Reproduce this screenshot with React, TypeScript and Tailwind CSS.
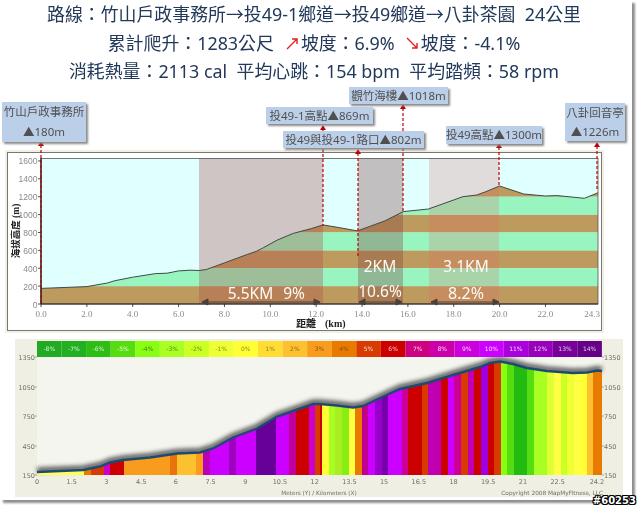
import React from "react";

const CJK = "font-['Noto_Sans','Noto_Sans_CJK_TC',sans-serif]";
const RED = "#c00000";

// elevation profile in km / metres, read off the upper chart
const profile: [number, number][] = [
  [0, 175], [2, 195], [2.9, 235], [3.2, 260], [4, 300], [5, 340], [5.5, 345], [6, 370], [6.5, 378], [6.9, 375],
  [7.2, 385], [8, 460], [9, 555], [9.4, 590], [9.7, 630], [10.3, 715], [11, 790], [11.8, 845], [12.3, 885], [13, 855],
  [13.8, 818], [15, 930], [15.8, 1033], [16.9, 1063], [18.4, 1200], [19, 1219], [19.4, 1256], [20, 1320],
  [21.05, 1230], [22, 1208], [22.5, 1212], [23.7, 1182], [24.3, 1245],
];

const kmX = (km: number) => 41 + km * 22.93;
const mY = (m: number) => 304 - m * 0.0894;
const profileLine = profile.map(([k, m]) => `${kmX(k).toFixed(1)},${mY(m).toFixed(1)}`).join(" ");

const legend: [string, string, string][] = [
  ["-8%", "#22aa22", "#d8f0d0"], ["-7%", "#22b022", "#d8f0d0"], ["-6%", "#2ebd14", "#d8f0d0"], ["-5%", "#55dd11", "#e8f8d8"],
  ["-4%", "#88ff11", "#4d7a20"], ["-3%", "#aaff22", "#5c8a20"], ["-2%", "#ccff22", "#6f8f20"], ["-1%", "#eeff33", "#85902a"],
  ["0%", "#ffff33", "#8f8f2a"], ["1%", "#ffdd33", "#8f7a2a"], ["2%", "#fdc02f", "#8f6a20"], ["3%", "#f99b1c", "#8a5a10"],
  ["4%", "#e87a00", "#8a4a00"], ["5%", "#d93a00", "#f8d8c8"], ["6%", "#cc0000", "#f8c8c8"], ["7%", "#cc0080", "#f8d0e8"],
  ["8%", "#cc00aa", "#f8d0f0"], ["9%", "#cc00dd", "#f8d0f8"], ["10%", "#cc00ff", "#f8d8ff"], ["11%", "#aa00dd", "#f0d0f8"],
  ["12%", "#9900bb", "#e8d0f0"], ["13%", "#770099", "#e0c8e8"], ["14%", "#660088", "#e0c8e8"],
];

// coloured columns under the lower profile, [right edge px, colour]
const columns: [number, string][] = [
  [84, "#ffff55"], [91, "#e87a00"], [104, "#d93a00"], [110, "#cc00cc"], [124, "#cc0000"], [170, "#f99b1c"], [177, "#e8720c"], [196, "#fdc02f"],
  [203, "#f99b1c"], [210, "#b900b9"], [229, "#cc00ff"], [236, "#a000c0"], [256, "#cc00ff"], [276, "#660099"], [289, "#cc00ff"], [296, "#c00099"],
  [309, "#cc0000"], [315, "#cc00cc"], [320, "#d93a00"], [322, "#cc0000"], [329, "#ffff33"], [335, "#aaff22"], [342, "#aaee22"], [349, "#88ee11"],
  [355, "#ffff44"], [362, "#e87a00"], [368, "#c0008f"], [375, "#cc00ff"], [382, "#9900cc"], [388, "#7700aa"], [402, "#cc00ff"], [408, "#cc0099"],
  [422, "#cc0000"], [428, "#d93a00"], [441, "#c000b0"], [448, "#cc0000"], [454, "#cc00ff"], [461, "#cc0099"], [468, "#d93a00"], [474, "#c000b0"],
  [481, "#cc0000"], [488, "#a000e0"], [494, "#cc0000"], [501, "#d93a00"], [507, "#88ff11"], [514, "#55dd11"], [527, "#22bb11"], [534, "#55dd11"],
  [547, "#aaff22"], [554, "#ddff33"], [561, "#ffff44"], [567, "#ccff22"], [574, "#eeff33"], [581, "#ffff44"], [587, "#ffff33"], [593, "#fdc02f"],
  [602, "#e87a00"],
];

const lowerProfile = "37,472 83,470 100,466.5 110,462.5 123,460 150,457.5 177,453.5 200,452.5 213,448.5 233,437.5 257,428.5 277,416.5 293,411 313,404 320,404 337,405.5 353,407.5 363,406 380,398 400,389 427,383 453,375 480,367 490,363 500,361.5 513,364 527,368 547,371 560,372 573,373 587,372.5 597,370.5 602,371";

const callouts = [
  { lines: ["竹山戶政事務所", "▲180m"], cls: "left-[2px] top-[17px] w-[84px] h-[40px]" },
  { lines: ["觀竹海樓▲1018m"], cls: "left-[349px] top-[2px] w-[99px] h-[17px]" },
  { lines: ["投49-1高點▲869m"], cls: "left-[266px] top-[22px] w-[107px] h-[17px]" },
  { lines: ["投49與投49-1路口▲802m"], cls: "left-[283px] top-[46px] w-[141px] h-[17px]" },
  { lines: ["投49高點▲1300m"], cls: "left-[446px] top-[41px] w-[96px] h-[18px]" },
  { lines: ["八卦回音亭", "▲1226m"], cls: "left-[565px] top-[18px] w-[60px] h-[38px]" },
];

const Leader = ({ x, top, bottom }: { x: number; top: number; bottom: number }) => (
  <g>
    <line x1={x} y1={top + 4} x2={x} y2={bottom} stroke={RED} strokeWidth={1.2} strokeDasharray="3 2" />
    <polygon points={`${x},${top} ${x - 3},${top + 5} ${x + 3},${top + 5}`} fill={RED} />
  </g>
);

const Span = ({ a, b }: { a: number; b: number }) => (
  <g stroke="#4a4038" fill="#4a4038">
    <line x1={a} y1={302} x2={b} y2={302} strokeWidth={1.2} />
    <polygon points={`${a},302 ${a + 6},299 ${a + 6},305`} />
    <polygon points={`${b},302 ${b - 6},299 ${b - 6},305`} />
  </g>
);

const UpperChart = () => (
  <svg viewBox="8 153 593 177" width={593} height={177} className="block">
    <defs>
      <clipPath id="under">
        <polygon points={`41,304 ${profileLine} 598,304`} />
      </clipPath>
    </defs>
    <rect x={41} y={158} width={557} height={146} fill="#e0ffff" />
    {[0, 400, 800, 1200].map((m) => (
      <rect key={m} x={41} y={mY(m + 200)} width={557} height={17.9} fill="#bd9a5d" clipPath="url(#under)" />
    ))}
    {[200, 600, 1000, 1400].map((m) => (
      <rect key={m} x={41} y={mY(m + 200)} width={557} height={17.9} fill="#98f5bf" clipPath="url(#under)" />
    ))}
    <rect x={199} y={158} width={124} height={146} fill="#ac4b4b" opacity={0.32} />
    <rect x={358} y={158} width={45} height={146} fill="#823c3c" opacity={0.33} />
    <rect x={429} y={158} width={70} height={146} fill="#e66868" opacity={0.23} />
    <polyline points={profileLine} fill="none" stroke="#3f4a44" strokeWidth={1} />
    <rect x={41} y={158.5} width={557} height={145.5} fill="none" stroke="#555" strokeWidth={0.8} />
    <line x1={41} y1={158} x2={41} y2={304} stroke="#111" strokeWidth={1.2} />
    <line x1={41} y1={304} x2={598} y2={304} stroke="#222" strokeWidth={1.2} />
    {[0, 200, 400, 600, 800, 1000, 1200, 1400, 1600].map((m) => (
      <g key={m}>
        <line x1={38} y1={mY(m)} x2={41} y2={mY(m)} stroke="#222" strokeWidth={0.8} />
        <text x={37.5} y={mY(m) + 3.5} textAnchor="end" fontSize={8.5} fill="#8a8a8a" fontFamily="'Liberation Sans', sans-serif">{m}</text>
      </g>
    ))}
    {[0, 2, 4, 6, 8, 10, 12, 14, 16, 18, 20, 22].map((k) => (
      <g key={k}>
        <line x1={kmX(k)} y1={304} x2={kmX(k)} y2={307} stroke="#222" strokeWidth={0.8} />
        <text x={kmX(k)} y={317} textAnchor="middle" fontSize={9} fill="#8a8a8a" fontFamily="'Liberation Serif', serif">{k.toFixed(1)}</text>
      </g>
    ))}
    <text x={600} y={317} textAnchor="end" fontSize={9} fill="#8a8a8a" fontFamily="'Liberation Serif', serif">24.3</text>
    <text x={0} y={0} transform="translate(19 231) rotate(-90)" textAnchor="middle" fontSize={9.5} fontWeight={700} fill="#222" fontFamily="'Liberation Serif', 'Noto Sans CJK TC', serif">海拔高度 (m)</text>
    <text x={296} y={327} fontSize={10} fontWeight={700} fill="#222" fontFamily="'Liberation Serif', 'Noto Sans CJK TC', serif">距離</text>
    <text x={325} y={327} fontSize={10} fontWeight={700} fill="#222" fontFamily="'Liberation Serif', serif">(km)</text>
    <Span a={202} b={320} />
    <Span a={359} b={402} />
    <Span a={431} b={499} />
    <g fill="#fbfbf6" fontFamily="'Noto Sans', sans-serif" textAnchor="middle">
      <text x={250.5} y={299} fontSize={15.5}>5.5KM</text>
      <text x={294} y={299} fontSize={15.5}>9%</text>
      <text x={380} y={272} fontSize={15.5}>2KM</text>
      <text x={380} y={297} fontSize={15.5}>10.6%</text>
      <text x={466} y={272} fontSize={15.5}>3.1KM</text>
      <text x={466} y={299} fontSize={16}>8.2%</text>
    </g>
  </svg>
);

const LowerChart = () => (
  <svg viewBox="15 339 608 158" width={608} height={158} className="block">
    <defs>
      <clipPath id="lower">
        <polygon points={`37,475 ${lowerProfile} 602,475`} />
      </clipPath>
    </defs>
    <rect x={37} y={357} width={565} height={118} fill="#f5f5ef" />
    <polyline points={lowerProfile} fill="none" stroke="#555" strokeWidth={5} className="blur-[2px]" transform="translate(0 -2)" />
    <g clipPath="url(#lower)">
      {columns.map(([right, color], i) => {
        const left = i === 0 ? 37 : columns[i - 1][0];
        return <rect key={right} x={left} y={355} width={right - left + 0.5} height={121} fill={color} />;
      })}
    </g>
    <polyline points={lowerProfile} fill="none" stroke="#1c4a72" strokeWidth={2.4} />
    {legend.map(([label, bg, fg], i) => (
      <g key={label}>
        <rect x={37 + i * 24.56} y={341} width={24.56} height={16} fill={bg} />
        <text x={37 + (i + 0.5) * 24.56} y={351} textAnchor="middle" fontSize={6} fill={fg} fontFamily="'DejaVu Sans', sans-serif">{label}</text>
      </g>
    ))}
    {([["1350", 357], ["1050", 387], ["750", 416], ["450", 446], ["150", 475]] as [string, number][]).map(([t, y]) => (
      <g key={t} fontSize={6.5} fill="#6f6f68" fontFamily="'DejaVu Sans', sans-serif">
        <text x={35} y={y + 2.5} textAnchor="end">{t}</text>
        <text x={604} y={y + 2.5}>{t}</text>
        <line x1={35} x2={37} y1={y} y2={y} stroke="#777" strokeWidth={0.6} />
        <line x1={602} x2={604} y1={y} y2={y} stroke="#777" strokeWidth={0.6} />
      </g>
    ))}
    {["0", "1.5", "3", "4.5", "6", "7.5", "9", "10.5", "12", "13.5", "15", "16.5", "18", "19.5", "21", "22.5", "24.2"].map((t) => (
      <text key={t} x={37 + Number(t) * 23.14} y={484} textAnchor="middle" fontSize={6.5} fill="#6f6f68" fontFamily="'DejaVu Sans', sans-serif">{t}</text>
    ))}
    <text x={319} y={495} textAnchor="middle" fontSize={5.7} fill="#6f6f68" fontFamily="'DejaVu Sans', sans-serif">Meters (Y) / Kilometers (X)</text>
    <text x={603} y={495} textAnchor="end" fontSize={5.8} fill="#6f6f68" fontFamily="'DejaVu Sans', sans-serif">Copyright 2008 MapMyFitness, LLC</text>
  </svg>
);

export default function App() {
  return (
    <div className="relative w-[640px] h-[509px] overflow-hidden bg-white">
      <div className="w-[632px] h-[500px] bg-white shadow-[3px_3px_2px_#8f8f8f] blur-[0.4px]">
        <div className={`${CJK} text-[#22395a] text-center flex flex-col items-center w-[628px] h-[85px] text-[17.9px] leading-[28.5px]`}>
          <div>路線：竹山戶政事務所→投49-1鄉道→投49鄉道→八卦茶園&nbsp;&nbsp;24公里</div>
          <div className="flex items-center">
            <span>累計爬升：1283公尺</span>
            <svg width="16" height="16" viewBox="0 0 16 16" className="ml-[10px] mr-[1px]">
              <path d="M3 14 L13 4 M8 4 H13 V9" fill="none" stroke="#e02020" strokeWidth="1.4" />
            </svg>
            <span>坡度：6.9%</span>
            <svg width="16" height="16" viewBox="0 0 16 16" className="ml-[9px] mr-[1px]">
              <path d="M3 3 L13 13 M8 13 H13 V8" fill="none" stroke="#e02020" strokeWidth="1.4" />
            </svg>
            <span>坡度：-4.1%</span>
          </div>
          <div>消耗熱量：2113 cal&nbsp;&nbsp;平均心跳：154 bpm&nbsp;&nbsp;平均踏頻：58 rpm</div>
        </div>

        <div className="relative pt-[65px]">
          <div className="ml-[5px] w-[599px] h-[183px] bg-[#f3f0e2] p-[2px]">
            <div className="h-full border border-[#777] bg-white overflow-hidden">
              <UpperChart />
            </div>
          </div>
          <svg viewBox="0 85 640 250" width={640} height={250} className="absolute left-0 top-0">
            <Leader x={41} top={141} bottom={304} />
            <Leader x={323} top={125} bottom={226} />
            <Leader x={358} top={149} bottom={258} />
            <Leader x={403} top={104} bottom={212} />
            <Leader x={499} top={143} bottom={186} />
            <Leader x={597} top={142} bottom={190} />
          </svg>
          {callouts.map((c) => (
            <div
              key={c.lines[0]}
              className={`absolute ${c.cls} ${CJK} flex flex-col items-center justify-around bg-[#bccfe8] shadow-[2px_2px_2px_#8a8a8a] text-[#505050] text-[11.5px] leading-[14px] whitespace-nowrap`}
            >
              {c.lines.map((l) => (
                <span key={l}>{l}</span>
              ))}
            </div>
          ))}
        </div>

        <div className="ml-[15px] mt-[6px] w-[608px] h-[158px] bg-[#f0efe3]">
          <LowerChart />
        </div>
      </div>
      <div className="absolute right-[4px] bottom-[3px] font-['DejaVu_Sans',sans-serif] font-bold text-[10px] leading-[10px] text-white [text-shadow:1px_0_0_#000,-1px_0_0_#000,0_1px_0_#000,0_-1px_0_#000,1px_1px_0_#000,-1px_-1px_0_#000,1px_-1px_0_#000,-1px_1px_0_#000]">
        #60253
      </div>
    </div>
  );
}
